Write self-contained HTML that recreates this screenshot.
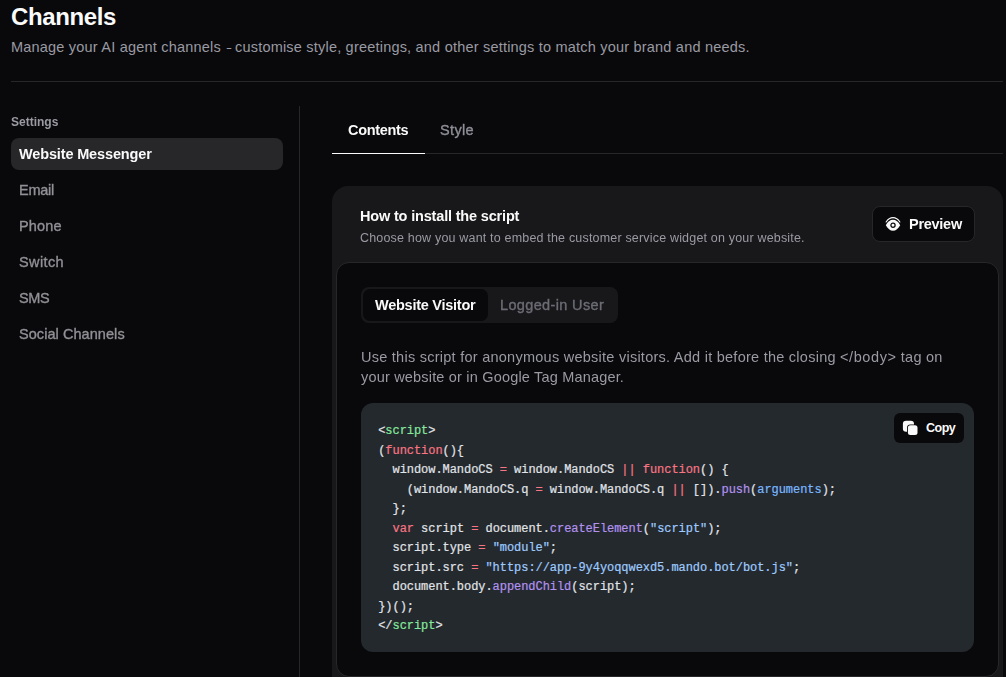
<!DOCTYPE html>
<html lang="en">
<head>
<meta charset="utf-8">
<title>Channels</title>
<style>
*{box-sizing:border-box;margin:0;padding:0}
html,body{width:1006px;height:677px;overflow:hidden;background:#09090b}
body{position:relative;font-family:"Liberation Sans",Arial,sans-serif;color:#fafafa;-webkit-font-smoothing:antialiased}
.abs{position:absolute;white-space:nowrap}
.t{position:absolute;white-space:nowrap;line-height:20px}
h1{position:absolute;left:11px;top:1px;font-size:24px;line-height:32px;font-weight:700;color:#fafafa;white-space:nowrap}
.sub{left:11px;top:37px;font-size:14.5px;color:#9a9aa3}
.hr{position:absolute;left:11px;top:81px;width:992px;height:1px;background:#27272a}
.vr{position:absolute;left:299px;top:106px;width:1px;height:580px;background:#27272a}
.lbl{left:11px;top:112px;font-size:12px;font-weight:700;color:#9a9aa3}
.act{position:absolute;left:11px;top:138px;width:272px;height:32px;border-radius:8px;background:#27272a}
.nav{left:19px;font-size:14.5px;color:#919196}
.nav.on{color:#fafafa;font-weight:700}
.tabline{position:absolute;left:332px;top:153px;width:671px;height:1px;background:#27272a}
.tabon{position:absolute;left:332px;top:153px;width:93px;height:1px;background:#fafafa}
.tab{font-size:14.5px;top:120px}
.card{position:absolute;left:332px;top:186px;width:671px;height:520px;border-radius:16px;background:#18181b}
.inner{position:absolute;left:336px;top:262px;width:663px;height:415px;border-radius:13px;background:#09090b;border:1px solid #27272a}
.btn{position:absolute;border-radius:8px;background:#09090b}
.seg{position:absolute;left:361px;top:287px;width:257px;height:36px;border-radius:8px;background:#18181b}
.segon{position:absolute;left:363px;top:289px;width:125px;height:32px;border-radius:7px;background:#09090b}
.code{position:absolute;left:361px;top:403px;width:613px;height:249px;border-radius:12px;background:#24292e}
pre{position:absolute;left:378.200px;top:422px;-webkit-text-stroke:0.2px currentColor;font-family:"Liberation Mono",monospace;font-size:12px;line-height:19.5px;letter-spacing:-0.05px;color:#e1e4e8;white-space:pre}
.k{color:#f97583}.s{color:#9ecbff}.f{color:#b392f0}.g{color:#85e89d}.c{color:#79b8ff}
#g{position:absolute;left:0;top:0;width:1006px;height:677px;will-change:transform}
.med{-webkit-text-stroke:0.35px currentColor}
/*LS*/
#h1{letter-spacing:-0.386px}
#sub{letter-spacing:0.205px}
#lbl{letter-spacing:0.000px}
#n1{letter-spacing:-0.146px}
#n2{letter-spacing:-0.230px}
#n3{letter-spacing:0.160px}
#n4{letter-spacing:0.386px}
#n5{letter-spacing:-0.340px}
#n6{letter-spacing:0.060px}
#tab1{letter-spacing:-0.334px}
#tab2{letter-spacing:0.360px}
#how{letter-spacing:-0.172px}
#choose{letter-spacing:0.182px}
#prev{letter-spacing:-0.270px}
#wv{letter-spacing:-0.257px}
#lu{letter-spacing:0.359px}
#p1{letter-spacing:0.255px}
#p2{letter-spacing:0.185px}
#copy{letter-spacing:-0.480px}
/*ENDLS*/
</style>
</head>
<body>
<h1 id="h1">Channels</h1>
<div class="t sub" id="sub">Manage your AI agent channels <span style="display:inline-block;transform:scaleX(0.550);margin:0 -2.400px 0 -0.300px">–</span> customise style, greetings, and other settings to match your brand and needs.</div>
<div id="g">
<div class="hr"></div>
<div class="vr"></div>
<div class="t lbl" id="lbl">Settings</div>
<div class="act"></div>
<div class="t nav on" id="n1" style="top:144px">Website Messenger</div>
<div class="t nav med" id="n2" style="top:180px">Email</div>
<div class="t nav med" id="n3" style="top:216px">Phone</div>
<div class="t nav med" id="n4" style="top:252px">Switch</div>
<div class="t nav med" id="n5" style="top:288px">SMS</div>
<div class="t nav med" id="n6" style="top:324px">Social Channels</div>

<div class="tabline"></div>
<div class="tabon"></div>
<div class="t tab" id="tab1" style="left:348px;font-weight:700;color:#fafafa">Contents</div>
<div class="t tab med" id="tab2" style="left:440px;color:#8f8f98">Style</div>

<div class="card"></div>
<div class="t" id="how" style="left:360px;top:206px;font-size:14.5px;font-weight:700;color:#fafafa">How to install the script</div>
<div class="t" id="choose" style="left:360px;top:228px;font-size:12.5px;color:#9a9aa3">Choose how you want to embed the customer service widget on your website.</div>
<div class="btn" style="left:872px;top:206px;width:103px;height:36px;border:1px solid #27272a"></div>
<svg class="abs" style="left:885px;top:216px" width="16" height="16" viewBox="0 0 16 16"><path d="M1.100 6C2.900 3.200 5.300 1.600 8 1.600s5.100 1.600 6.900 4.400" fill="none" stroke="#fafafa" stroke-width="1.050" stroke-linecap="round"/><path d="M0.800 9.200C2.700 5.800 5.200 3.850 8 3.850s5.300 1.950 7.200 5.350C13.300 12.700 10.800 14.700 8 14.700S2.700 12.700 0.800 9.200Z" fill="#fafafa"/><circle cx="8" cy="9.200" r="2.100" fill="#fafafa" stroke="#09090b" stroke-width="1.250"/></svg>
<div class="t" id="prev" style="left:909px;top:214px;font-size:14.5px;font-weight:700;color:#fafafa">Preview</div>

<div class="inner"></div>
<div class="seg"></div>
<div class="segon"></div>
<div class="t" id="wv" style="left:375px;top:295px;font-size:14.5px;font-weight:700;color:#fafafa">Website Visitor</div>
<div class="t med" id="lu" style="left:500px;top:295px;font-size:14.5px;color:#6c6c75">Logged-in User</div>
<div class="t" id="p1" style="left:361px;top:347px;font-size:14.5px;color:#9a9aa3">Use this script for anonymous website visitors. Add it before the closing <span style="letter-spacing:0.580px">&lt;/body&gt;</span> tag on</div>
<div class="t" id="p2" style="left:361px;top:367px;font-size:14.5px;color:#9a9aa3">your website or in Google Tag Manager.</div>

</div>
<div class="code"></div>
<pre id="pre">&lt;<span class="g">script</span>&gt;
(<span class="k">function</span>(){
  window.MandoCS <span class="k">=</span> window.MandoCS <span class="k">||</span> <span class="k">function</span>() {
    (window.MandoCS.q <span class="k">=</span> window.MandoCS.q <span class="k">||</span> []).<span class="f">push</span>(<span class="c">arguments</span>);
  };
  <span class="k">var</span> script <span class="k">=</span> document.<span class="f">createElement</span>(<span class="s">"script"</span>);
  script.type <span class="k">=</span> <span class="s">"module"</span>;
  script.src <span class="k">=</span> <span class="s">"https://app-9y4yoqqwexd5.mando.bot/bot.js"</span>;
  document.body.<span class="f">appendChild</span>(script);
})();
&lt;/<span class="g">script</span>&gt;</pre>
<div class="btn" style="left:894px;top:413px;width:70px;height:30px;border-radius:6px"></div>
<svg class="abs" style="left:902px;top:420px" width="17" height="17" viewBox="0 0 17 17"><rect x="0.900" y="0.700" width="11.100" height="11.100" rx="3.200" fill="#fafafa"/><rect x="5" y="4.400" width="11.400" height="11.600" rx="3.400" fill="#09090b"/><rect x="5.900" y="5.300" width="9.600" height="9.800" rx="2.500" fill="#fafafa"/></svg>
<div class="t" id="copy" style="left:926px;top:418.400px;font-size:12.5px;font-weight:700;color:#fafafa">Copy</div>
</body>
</html>
